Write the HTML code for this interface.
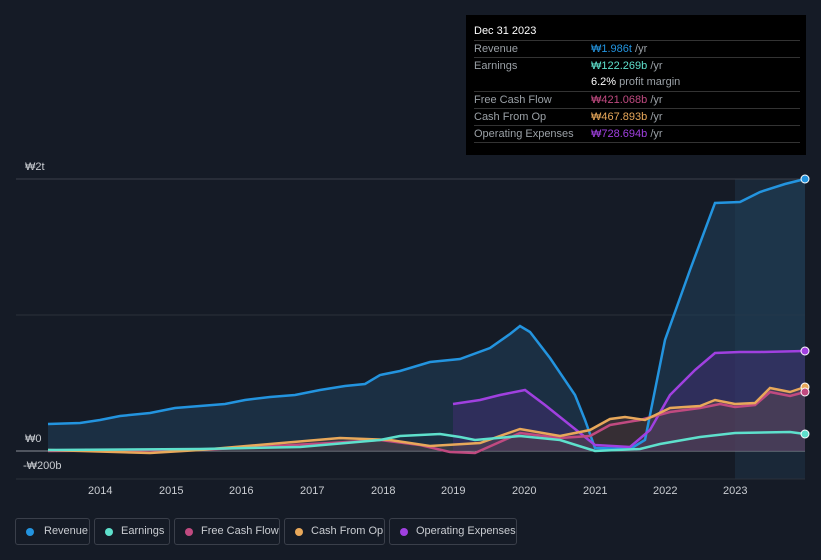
<!DOCTYPE html>
<html><head><style>
body{margin:0;background:#151b26;font-family:"Liberation Sans",sans-serif;}
.wrap{position:relative;width:821px;height:560px;overflow:hidden;background:#151b26}
.tt{position:absolute;left:466px;top:15px;width:340px;height:140px;background:#000;color:#fff;font-size:11px}
.tt .h{position:absolute;left:8px;top:10px;font-size:11px}
.row{position:absolute;left:8px;width:326px;border-top:1px solid #333;height:17px;line-height:17px;color:#9aa0a6}
.row span{position:absolute;left:117px}
.leg{position:absolute;top:518px;height:27px;border:1px solid #3a3f4a;border-radius:3px;color:#c9ccd1;font-size:11px;line-height:25px;box-sizing:border-box;white-space:nowrap}
.leg i{position:absolute;left:10px;top:9px;width:8px;height:8px;border-radius:50%}
.leg b{font-weight:normal;position:absolute;left:26px}
.ax{position:absolute;color:#c9ccd1;font-size:11px}
</style></head><body><div class="wrap">
<svg width="821" height="560" style="position:absolute;left:0;top:0">
<rect x="735" y="179" width="70" height="300" fill="#1a2838"/>
<line x1="16" y1="179" x2="805" y2="179" stroke="#3a3f4a"/>
<line x1="16" y1="315" x2="805" y2="315" stroke="#2a303b"/>
<line x1="16" y1="451" x2="805" y2="451" stroke="#8a8f98"/>
<line x1="16" y1="479" x2="805" y2="479" stroke="#2a303b"/>
<path d="M48,424 L80,423 L100,420 L120,416 L150,413 L175,408 L200,406 L225,404 L245,400 L270,397 L295,395 L320,390 L345,386 L365,384 L380,375 L400,371 L430,362 L460,359 L490,348 L510,334 L520,326 L530,332 L550,358 L575,395 L585,420 L595,448 L630,449 L645,440 L665,340 L690,270 L715,203 L740,202 L760,192 L785,184 L805,179 L805,451 L48,451Z" fill="#1f3d57" fill-opacity="0.6"/>
<path d="M453,404 L480,400 L500,395 L525,390 L545,405 L570,425 L595,445 L630,447 L650,430 L670,395 L695,370 L715,353 L740,352 L760,352 L805,351 L805,451 L453,451Z" fill="#4a2f7a" fill-opacity="0.45"/>
<path d="M48,450 L150,453 L200,450 L340,438 L390,440 L430,446 L480,443 L520,429 L560,436 L590,430 L610,419 L625,417 L645,420 L670,408 L700,406 L715,400 L735,404 L755,403 L770,388 L790,392 L805,387 L805,451 L48,451Z" fill="#6a4a4a" fill-opacity="0.4"/>
<g fill="none" stroke-width="2.5">
<path d="M48,424 L80,423 L100,420 L120,416 L150,413 L175,408 L200,406 L225,404 L245,400 L270,397 L295,395 L320,390 L345,386 L365,384 L380,375 L400,371 L430,362 L460,359 L490,348 L510,334 L520,326 L530,332 L550,358 L575,395 L585,420 L595,448 L630,449 L645,440 L665,340 L690,270 L715,203 L740,202 L760,192 L785,184 L805,179" stroke="#2394df"/>
<path d="M453,404 L480,400 L500,395 L525,390 L545,405 L570,425 L595,445 L630,447 L650,430 L670,395 L695,370 L715,353 L740,352 L760,352 L805,351" stroke="#a040e0"/>
<path d="M48,451 L200,450 L330,443 L380,440 L420,445 L450,452 L475,453 L520,433 L560,438 L590,436 L610,425 L640,420 L670,412 L700,408 L720,404 L735,407 L755,405 L770,392 L790,396 L805,392" stroke="#c04a80"/>
<path d="M48,450 L150,453 L200,450 L340,438 L390,440 L430,446 L480,443 L520,429 L560,436 L590,430 L610,419 L625,417 L645,420 L670,408 L700,406 L715,400 L735,404 L755,403 L770,388 L790,392 L805,387" stroke="#e8a85a"/>
<path d="M48,450 L200,449 L300,447 L380,440 L400,436 L440,434 L460,437 L475,440 L520,436 L560,440 L595,451 L640,449 L660,444 L700,437 L735,433 L790,432 L805,434" stroke="#5ee0cc"/>
</g>
<circle cx="805" cy="179" r="4" fill="#2394df" stroke="#fff"/>
<circle cx="805" cy="351" r="4" fill="#a040e0" stroke="#fff"/>
<circle cx="805" cy="387" r="4" fill="#e8a85a" stroke="#fff"/>
<circle cx="805" cy="392" r="4" fill="#c04a80" stroke="#fff"/>
<circle cx="805" cy="434" r="4" fill="#5ee0cc" stroke="#fff"/>
</svg>
<div class="ax" style="left:25px;top:161px">₩2t</div>
<div class="ax" style="left:25px;top:433px">₩0</div>
<div class="ax" style="left:23px;top:460px">-₩200b</div>
<div class="ax" style="left:88px;top:485px">2014</div>
<div class="ax" style="left:159px;top:485px">2015</div>
<div class="ax" style="left:229px;top:485px">2016</div>
<div class="ax" style="left:300px;top:485px">2017</div>
<div class="ax" style="left:371px;top:485px">2018</div>
<div class="ax" style="left:441px;top:485px">2019</div>
<div class="ax" style="left:512px;top:485px">2020</div>
<div class="ax" style="left:583px;top:485px">2021</div>
<div class="ax" style="left:653px;top:485px">2022</div>
<div class="ax" style="left:723px;top:485px">2023</div>
<div class="tt">
<div class="h">Dec 31 2023</div>
<div class="row" style="top:25px">Revenue<span><em style="font-style:normal;color:#2394df">₩1.986t</em> /yr</span></div>
<div class="row" style="top:42px">Earnings<span><em style="font-style:normal;color:#5ee0cc">₩122.269b</em> /yr</span></div>
<div class="row" style="top:59px;border:0"><span><em style="font-style:normal;color:#fff">6.2%</em> profit margin</span></div>
<div class="row" style="top:76px">Free Cash Flow<span><em style="font-style:normal;color:#c04a80">₩421.068b</em> /yr</span></div>
<div class="row" style="top:93px">Cash From Op<span><em style="font-style:normal;color:#e8a85a">₩467.893b</em> /yr</span></div>
<div class="row" style="top:110px">Operating Expenses<span><em style="font-style:normal;color:#a040e0">₩728.694b</em> /yr</span></div>
<div class="row" style="top:127px"></div>
</div>
<div class="leg" style="left:15px;width:75px"><i style="background:#2394df"></i><b style="left:28px">Revenue</b></div>
<div class="leg" style="left:94px;width:76px"><i style="background:#5ee0cc"></i><b>Earnings</b></div>
<div class="leg" style="left:174px;width:106px"><i style="background:#c04a80"></i><b>Free Cash Flow</b></div>
<div class="leg" style="left:284px;width:101px"><i style="background:#e8a85a"></i><b>Cash From Op</b></div>
<div class="leg" style="left:389px;width:128px"><i style="background:#a040e0"></i><b>Operating Expenses</b></div>
</div></body></html>
